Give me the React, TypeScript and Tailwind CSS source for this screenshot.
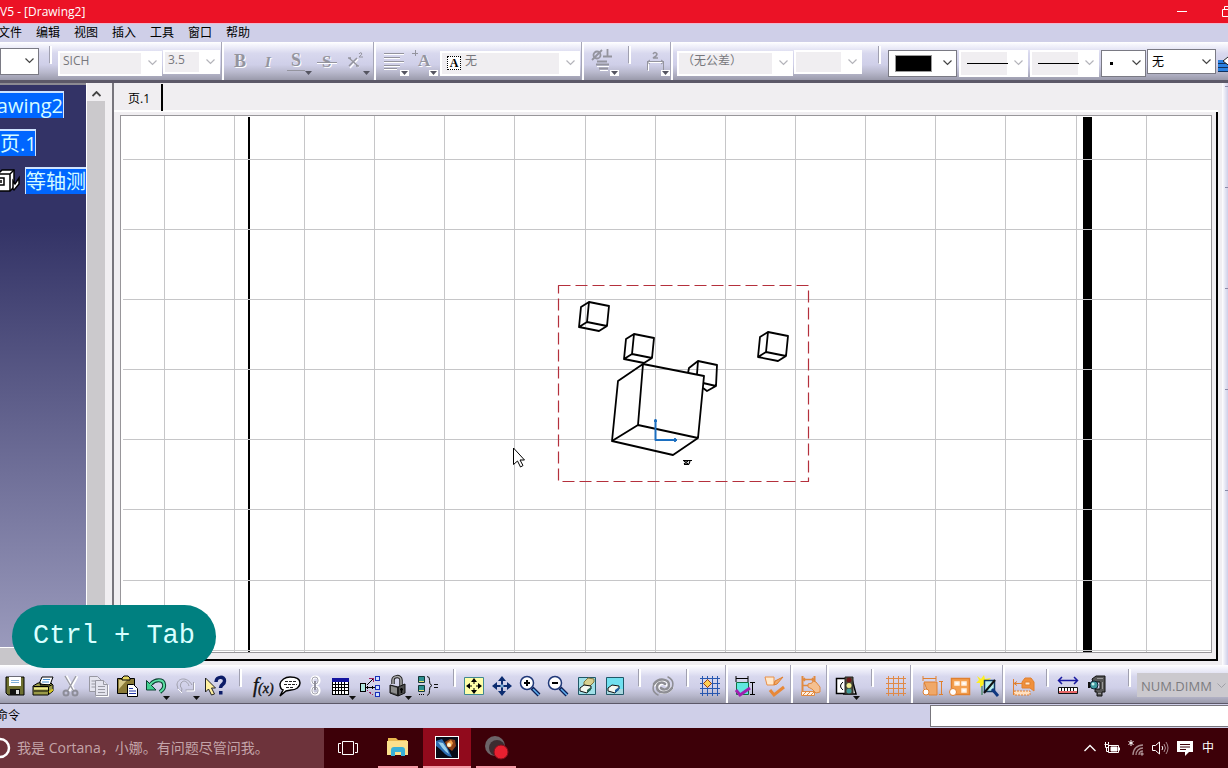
import type { ReactNode } from "react";

const UI_FONT = "font-['Open_Sans','Noto_Sans_CJK_SC',sans-serif]";
const BAR =
  "bg-[linear-gradient(to_bottom,#ffffff_0%,#f4f4fc_8%,#d8d8ee_30%,#cfcfe8_60%,#b8b8cc_80%,#9a9aab_100%)]";

const MUTED = "#94949e";

function PixelGrid({ color }: { color: string }) {
  return <path d="M4.500 2v20M9.500 2v20M14.500 2v20M19.500 2v20M2 4.500h20M2 9.500h20M2 14.500h20M2 19.500h20" stroke={color} />;
}

// All drawings use a 24 x 24 box.
const icons: Record<string, ReactNode> = {
  bold: (
    <>
      <text x="7" y="19" fontSize="18" fontWeight="700" fill="#fff" className="font-['Liberation_Serif',serif]">B</text>
      <text x="6" y="18" fontSize="18" fontWeight="700" fill={MUTED} className="font-['Liberation_Serif',serif]">B</text>
    </>
  ),
  italic: (
    <>
      <text x="9" y="19" fontSize="15" fontWeight="700" fontStyle="italic" fill="#fff" className="font-['Liberation_Serif',serif]">I</text>
      <text x="8" y="18" fontSize="15" fontWeight="700" fontStyle="italic" fill={MUTED} className="font-['Liberation_Serif',serif]">I</text>
    </>
  ),
  underline: (
    <>
      <text x="6" y="18" fontSize="18" fontWeight="700" fill="#fff" className="font-['Liberation_Serif',serif]">S</text>
      <text x="5" y="17" fontSize="18" fontWeight="700" fill={MUTED} className="font-['Liberation_Serif',serif]">S</text>
      <path d="M1 21.500h18" stroke={MUTED} />
    </>
  ),
  strike: (
    <>
      <text x="8" y="19" fontSize="17" fontWeight="700" fill="#fff" className="font-['Liberation_Serif',serif]">S</text>
      <text x="7" y="18" fontSize="17" fontWeight="700" fill={MUTED} className="font-['Liberation_Serif',serif]">S</text>
      <path d="M2 14.500h20" stroke="#fff" />
      <path d="M2 13.500h20" stroke={MUTED} />
    </>
  ),
  superscript: (
    <>
      <path d="M6 10l9 8M14 10l-8 9" stroke="#fff" strokeWidth="1.500" />
      <path d="M5 9l9 8M13 9l-8 8M4 9h3M12 17h3" stroke={MUTED} strokeWidth="1.500" />
      <path d="M15 5q1-2 2.500-1t-2.500 4h4" stroke={MUTED} />
    </>
  ),
  align: (
    <>
      <path d="M2 5.500h20M2 9.500h16M2 13.500h20M2 17.500h16M2 20.500h13" stroke="#fff" />
      <path d="M2 4.500h20M2 8.500h16M2 12.500h20M2 16.500h16M2 19.500h13" stroke={MUTED} />
    </>
  ),
  anchor: (
    <>
      <path d="M1 4.500h6M4.500 1v6" stroke={MUTED} />
      <text x="8" y="18" fontSize="17" fontWeight="700" fill="#fff" className="font-['Liberation_Serif',serif]">A</text>
      <text x="7" y="17" fontSize="17" fontWeight="700" fill={MUTED} className="font-['Liberation_Serif',serif]">A</text>
    </>
  ),
  symbol: (
    <g stroke={MUTED} fill="none" strokeWidth="1.800">
      <path d="M6 17.500h12M9 21.500h8" stroke="#fff" strokeWidth="1" />
      <circle cx="6" cy="6" r="3.500" />
      <path d="M1 11L11 1M12 7.500h9M16.500 0v7M5 15.500h13M8 19.500h9M6 12.500h10" />
    </g>
  ),
  dimension: (
    <g fill="none">
      <path d="M5.500 22v-8.500h14" stroke="#fff" />
      <path d="M4.500 21V12.500h16V21M4 13l3-2M4 13l3 2M21 13l-3-2M21 13l-3 2" stroke={MUTED} />
      <path d="M10 5q2-3 4 0q0 2-4 4h5" stroke={MUTED} strokeWidth="1.500" />
    </g>
  ),
  save: (
    <>
      <path d="M3 3h18v18H5l-2-2z" fill="#6e7030" stroke="#000" />
      <path d="M6 3h12v9H6z" fill="#fff" />
      <path d="M8 6.500h8M8 8.500h8" stroke="#7fb0d8" />
      <path d="M7 15h10v6H7z" fill="#111" />
      <path d="M13 16h3v4h-3z" fill="#ddd" />
    </>
  ),
  print: (
    <>
      <path d="M8 10l3-7h11l-3 8z" fill="#fff" stroke="#000" />
      <path d="M12 5.500h7M11 8h7" stroke="#4a90d0" />
      <path d="M2 12l5-3h3l-1 2h9l2-2 2 2v6l-5 4H2z" fill="#9a9a48" stroke="#000" />
      <path d="M2.500 12.500h15l4-2M17.500 13v7M3 17h14" stroke="#000" fill="none" />
      <path d="M3 14.500h14" stroke="#eee98a" strokeWidth="2" />
      <path d="M18 18.500l4-3" stroke="#d8c820" strokeWidth="2" />
    </>
  ),
  cut: (
    <g fill="none">
      <path d="M7 2l8 15M18 2l-8 15" stroke="#fff" strokeWidth="3" />
      <path d="M6 2l8 14M17 2L9 16" stroke="#9a9aa4" strokeWidth="1.500" />
      <circle cx="7" cy="19" r="2.500" stroke="#8d8d98" strokeWidth="2" />
      <circle cx="16" cy="19" r="2.500" stroke="#8d8d98" strokeWidth="2" />
    </g>
  ),
  copy: (
    <g fill="#e4e4ee" stroke="#9898a2">
      <path d="M2.500 2.500h8l4 4v11h-12z" />
      <path d="M8.500 6.500h8l4 4v11h-12z" />
      <path d="M16.500 6.500v4h4M11 12.500h7M11 15.500h7M11 18.500h7M4.500 7h4M4.500 10h4M4.500 13h4" />
      <path d="M21.500 11v11.500H9" stroke="#fff" fill="none" />
    </g>
  ),
  paste: (
    <>
      <path d="M2.500 4.500h17v15h-17z" fill="#8a7a38" stroke="#000" />
      <path d="M4 6h8L4 15z" fill="#d5c88a" />
      <path d="M7 6V4l2-2h4l2 2v2z" fill="#e8d860" stroke="#000" />
      <path d="M12.500 10.500h6l4 4v8h-10z" fill="#fff" stroke="#000" />
      <path d="M14 14.500h4M14 17h7M14 19.500h7" stroke="#2438a8" />
    </>
  ),
  undo: (
    <>
      <path d="M7 10c4-5 12-5 13 0 1 4-1 6-4 8" fill="none" stroke="#0a4030" strokeWidth="4" />
      <path d="M2.500 6.500v9.500h9.500z" fill="#42d090" stroke="#0a4030" />
      <path d="M6 11c4-6 13-6 14-1 1 4-1 6-4 8" fill="none" stroke="#5ce0a4" strokeWidth="2" />
    </>
  ),
  redo: (
    <g fill="none" stroke="#a0a0ac">
      <path d="M19 11C14 2 4 4 4 11q0 4 4 7l1-3q-3-3-1-6c3-4 7-1 8 3" />
      <path d="M20.500 8v8h-8" />
      <path d="M21.500 9v8h-8M5 15l4 4" stroke="#fff" />
    </g>
  ),
  help: (
    <>
      <path d="M2.500 4v14l3-3 3 6 3-1-3-6h4z" fill="#fff0a0" stroke="#222" />
      <path d="M13 8c0-6 9-6 8.500-1 0 4-4 3-4 7" fill="none" stroke="#0c1c68" strokeWidth="3.500" />
      <path d="M16 17h3.500v3.500H16z" fill="#0c1c68" />
    </>
  ),
  formula: (
    <g className="font-['Liberation_Serif',serif]" fontStyle="italic" fill="#111" stroke="#111" strokeWidth=".4">
      <text x="3" y="18" fontSize="20">f</text>
      <text x="8" y="19" fontSize="14">(x)</text>
    </g>
  ),
  comment: (
    <>
      <path d="M12 3c6 0 10 2 10 6s-4 7-9 7l-5 1-6 5 3-6c-3-1-3-4-3-6 1-4 5-7 10-7z" fill="#fff" stroke="#000" strokeWidth="1.500" />
      <path d="M7 7.500h11M6 10.500h13M8 13.500h8" stroke="#222" strokeDasharray="3 1" />
    </>
  ),
  link: (
    <g fill="none">
      <rect x="8" y="3" width="7" height="7" rx="3" stroke="#fff" strokeWidth="3" />
      <rect x="8" y="13" width="7" height="7" rx="3" stroke="#fff" strokeWidth="3" />
      <rect x="8" y="3" width="6" height="7" rx="3" stroke="#a4a4b0" />
      <rect x="8" y="13" width="6" height="7" rx="3" stroke="#a4a4b0" />
      <path d="M11 7v9" stroke="#90909c" strokeWidth="2" />
    </g>
  ),
  table: (
    <>
      <path d="M2 4h17v17H2z" fill="#fff" />
      <path d="M2.500 8v13M5.500 8v13M8.500 8v13M11.500 8v13M14.500 8v13M18.500 8v13M2 10.500h17M2 13.500h17M2 16.500h17M2 20.500h17" stroke="#000" />
      <path d="M2 4h17v4H2z" fill="#1414a0" />
    </>
  ),
  tree: (
    <g fill="none" shapeRendering="crispEdges">
      <path d="M2.500 9.500h5v8h-5z" fill="#b0e8e0" stroke="#000" />
      <path d="M17.500 2.500h4v4h-4zM17.500 11.500h4v4h-4zM17.500 18.500h4v4h-4z" fill="#cfe0ff" stroke="#1830b8" />
      <path d="M7.500 13.500h9M9 11l6-6M14 12v3M9 12v3" stroke="#000" />
      <path d="M9 16l6 5" stroke="#a02060" strokeDasharray="2 1" />
      <path d="M11 4h4v4" stroke="#a02060" />
    </g>
  ),
  lock: (
    <>
      <path d="M7 10V6c0-4 8-5 8 0v6" fill="none" stroke="#222" strokeWidth="3.500" />
      <path d="M7 10V6c0-4 8-5 8 0v6" fill="none" stroke="#aaa" strokeWidth="1.500" />
      <path d="M4 11l8 2v9l-8-3zM12 13l7-3v9l-7 3z" fill="#4c4c4c" stroke="#111" />
      <path d="M5 12l6 2v6l-6-2z" fill="#8c8c8c" />
      <path d="M15.500 14v5M14 15.500h3" stroke="#000" strokeWidth="1.500" />
    </>
  ),
  equate: (
    <g fill="none">
      <path d="M2.500 2.500h6v6h-6zM2.500 11.500h6v6h-6z" fill="#2c9090" stroke="#123838" />
      <path d="M3 7.500h5M3 16.500h5" stroke="#e8e070" />
      <path d="M3 20.500h6" stroke="#000" strokeDasharray="1 1" />
      <path d="M11 2.500q3 0 2.500 4t2.500 5q-3 1-2.500 5t-2.500 5" stroke="#111" />
      <path d="M18 10.500h4M18 13.500h4" stroke="#111" />
    </g>
  ),
  fit: (
    <>
      <path d="M2.500 3.500h19v17h-19z" fill="#ffffa8" stroke="#408890" />
      <path d="M12 7v3M12 14v3M6 12h4M14 12h4" stroke="#000" />
      <path d="M12 4l3 4H9zM12 20l3-4H9zM4 12l4-3v6zM20 12l-4-3v6z" fill="#000" />
    </>
  ),
  pan: (
    <>
      <path d="M12 4v16M4 12h16" stroke="#0c2c70" strokeWidth="2" />
      <path d="M12 2l4 5H8zM12 22l4-5H8zM2 12l5-4v8zM22 12l-5-4v8z" fill="#0c2c70" />
      <path d="M10.500 10.500h3v3h-3z" fill="#80b0d8" />
    </>
  ),
  zoomIn: (
    <>
      <path d="M14 14l7 7" stroke="#0c2058" strokeWidth="4" />
      <path d="M15 15l6 6" stroke="#60b0f0" strokeWidth="1.500" />
      <circle cx="9" cy="9" r="6.500" fill="#fff" stroke="#203878" strokeWidth="1.500" />
      <path d="M6 9h6M9 6v6" stroke="#000" strokeWidth="2" />
    </>
  ),
  zoomOut: (
    <>
      <path d="M14 14l7 7" stroke="#0c2058" strokeWidth="4" />
      <path d="M15 15l6 6" stroke="#60b0f0" strokeWidth="1.500" />
      <circle cx="9" cy="9" r="6.500" fill="#fff" stroke="#203878" strokeWidth="1.500" />
      <path d="M6 9h6" stroke="#000" strokeWidth="2" />
    </>
  ),
  viewA: (
    <>
      <path d="M3.500 3.500h17v17h-17z" fill="#a0e0e8" stroke="#205868" />
      <path d="M9 8l4-4 6 1v3l-4 4-6-1z" fill="#d8d090" stroke="#807840" />
      <path d="M5 14l4-3 7 1v3l-4 4-7-2z" fill="#f4f8f0" stroke="#111" />
      <path d="M12 16l4-3v3l-4 3z" fill="#206050" />
    </>
  ),
  viewB: (
    <>
      <path d="M3.500 3.500h17v17h-17z" fill="#70e0f0" stroke="#205868" />
      <path d="M4 15h16v5H4z" fill="#a8d8e0" />
      <path d="M5 14l4-3 7 1v3l-4 4-7-2z" fill="#f4f8f0" stroke="#111" />
      <path d="M12 16l4-3v3l-4 3z" fill="#2060a0" />
    </>
  ),
  update: (
    <g fill="none" strokeLinecap="round">
      <g stroke="#fff" strokeWidth="3">
        <path d="M15 11c-3-3-8-1-8 3 0 5 9 7 14 0" />
        <path d="M11 15c3 2 7 0 7-4 0-5-9-7-14 0" />
      </g>
      <g stroke="#8e8e94" strokeWidth="2.500">
        <path d="M14 10c-3-3-8-1-8 3 0 6 10 8 15 1" />
        <path d="M10 14c3 3 8 1 8-3 0-6-10-8-15-1" />
        <path d="M3 10c-2 5 0 9 4 11M21 14c2-5 0-9-4-11" strokeWidth="1.500" />
      </g>
    </g>
  ),
  gridBlue: (
    <>
      <PixelGrid color="#2858b0" />
      <path d="M9.500 5.500l4 4-4 4-4-4z" fill="#ffd050" stroke="#a04010" />
    </>
  ),
  dimCheck: (
    <>
      <path d="M3 2v6M15 2v6M3 4.500h12M19.500 8v13M17 8.500h5M17 20.500h5" stroke="#000" />
      <path d="M3.500 8.500h12v12h-12z" fill="#60e8e0" stroke="#107040" />
      <path d="M3 16l4 5 10-7" fill="none" stroke="#a020b0" strokeWidth="3" />
    </>
  ),
  brushCheck: (
    <>
      <path d="M2 3h9v8H4z" fill="#ffe8cc" stroke="#e89048" />
      <path d="M20 3l-6 7-3 1 1-4z" fill="#f0a868" stroke="#e08030" />
      <path d="M7 16l4 5 10-8" fill="none" stroke="#e88838" strokeWidth="3" />
    </>
  ),
  hatchHand: (
    <g stroke="#e08a40" fill="none">
      <path d="M3.500 2v15M15.500 2v6" strokeWidth="2" />
      <path d="M4 5.500h11M4 11.500h7M6 4l-2 1.500L6 7M13 4l2 1.500L13 7" strokeWidth="1.500" />
      <path d="M2.500 17.500h13v4h-13z" fill="#fff0e0" />
      <path d="M4 21l3-3M8 21l3-3M12 21l3-3" />
      <path d="M9 10l4-1 1-2 3 1 4 5v5l-4 1-4-4-4-2z" fill="#f5c090" />
    </g>
  ),
  traffic: (
    <>
      <path d="M2.500 4.500h10v15H2.500zM18 5l4 15H9" fill="#fff" stroke="#000" strokeWidth="1.500" />
      <path d="M9 8q-5 4 0 8" stroke="#000" fill="none" />
      <path d="M11 3h8v17h-8z" fill="#4c4c3c" stroke="#222" />
      <circle cx="15" cy="6" r="2.500" fill="#6a1818" />
      <circle cx="15" cy="11.500" r="2.500" fill="#f0ec90" />
      <circle cx="15" cy="17" r="2.500" fill="#409a98" />
    </>
  ),
  gridOrange: <PixelGrid color="#e08a48" />,
  dimBox: (
    <g stroke="#e08030">
      <path d="M3 2v5M16 2v5M3 4.500h13M21.500 7v14M19 7.500h4M19 20.500h4" />
      <path d="M4 8h13v13H9z" fill="#f0a868" />
      <circle cx="6" cy="18" r="3" fill="#fff" />
      <path d="M4 15V9" />
    </g>
  ),
  tiles: (
    <g stroke="#e08030">
      <path d="M3.500 4.500h18v16h-18z" fill="#f4a050" strokeWidth="1.500" />
      <path d="M7 8h4v3H7zM14 8h4v3h-4zM14 15h4v3h-4z" fill="#fff" stroke="#fff0e0" strokeWidth="1.500" />
      <circle cx="5" cy="18" r="3.500" fill="#fff" />
    </g>
  ),
  highlight: (
    <>
      <path d="M1 2l4 3 3-4 1 4 6-1-4 4 2 4-5-2-4 4V9L0 9l3-3z" fill="#fff020" />
      <path d="M8.500 6.500h10v11h-10z" fill="#b8f0f0" stroke="#103860" strokeWidth="1.500" />
      <path d="M8 19L19 6" stroke="#111" strokeWidth="2" />
      <path d="M16 15l6 7" stroke="#103880" strokeWidth="3" />
      <path d="M6 12v9" stroke="#207040" />
    </>
  ),
  lockDim: (
    <g stroke="#e08030">
      <path d="M2.500 5v16M3 9.500h8M3 9.500l3-2M3 9.500l3 2" fill="none" />
      <path d="M3 17h16v4H3z" fill="#ffe0c0" strokeDasharray="2 1" />
      <path d="M11 8l3-4h6l3 4v9l-4-3h-8z" fill="#f0903c" />
      <path d="M14 8h5v3h-5z" fill="#ffe8d0" />
    </g>
  ),
  ruler: (
    <>
      <path d="M3 6.500h18M6 3L2.500 6.500 6 10M18 3l3.500 3.500L18 10" stroke="#1818a0" fill="none" strokeWidth="1.500" />
      <path d="M2.500 13.500h19v6h-19z" fill="#fff" stroke="#111" />
      <path d="M3 17h18v2H3z" fill="#e86868" />
      <path d="M5.500 14v3M8.500 14v3M11.500 14v3M14.500 14v3M17.500 14v3" stroke="#111" />
    </>
  ),
  clamp: (
    <>
      <path d="M7 5l4-3h9v16h-3v4h-5v-4h-2v-3h5V8H8z" fill="#555" stroke="#111" />
      <path d="M12 4.500h6M17.500 8v7M13 19.500h3" stroke="#999" />
      <circle cx="9" cy="11" r="4" fill="#409aa0" stroke="#123" />
      <circle cx="8" cy="10" r="1.500" fill="#c8f0f0" />
      <path d="M4 8v6" stroke="#111" strokeWidth="2" />
    </>
  ),
};

function Glyph({ name }: { name: string }) {
  return (
    <svg width="24" height="24" viewBox="0 0 24 24" fill="none" aria-hidden="true" className="shrink-0">
      {icons[name]}
    </svg>
  );
}

function ToolButton({
  icon,
  label,
  arrow,
  className = "w-7",
}: {
  icon: string;
  label: string;
  arrow?: "plain" | "box" | "dark";
  className?: string;
}) {
  return (
    <button type="button" aria-label={label} className={`relative flex h-full shrink-0 items-center justify-center ${className}`}>
      <Glyph name={icon} />
      {arrow && (
        <svg
          width="9"
          height="6"
          viewBox="0 0 9 6"
          aria-hidden="true"
          className={`absolute -right-px ${arrow === "dark" ? "bottom-0.5" : "bottom-1"} ${arrow === "box" ? "bg-white" : ""}`}
        >
          <path d="M1 1h7L4.500 5z" fill={arrow === "dark" ? "#111" : "#555560"} />
        </svg>
      )}
    </button>
  );
}

function Grip({ className = "" }: { className?: string }) {
  return <div className={`mt-1 h-[18px] w-[3px] shrink-0 self-start border-r-2 border-b border-white border-l border-l-[#a0a0b0] ${className}`} />;
}

function Divider({ className = "" }: { className?: string }) {
  return <div className={`h-full w-[3px] shrink-0 border-l border-l-[#a6a6b8] bg-white ${className}`} />;
}

function Combo({
  label,
  options,
  disabled,
  className = "",
  children,
}: {
  label: string;
  options: string[];
  disabled?: boolean;
  className?: string;
  children?: ReactNode;
}) {
  return (
    <div className={`relative shrink-0 overflow-hidden border bg-white ${disabled ? "border-white" : "border-[#7a7a84]"} ${className}`}>
      {disabled && <div className="absolute inset-y-px left-px right-5 bg-[#f0eef1]" />}
      <select
        aria-label={label}
        disabled={disabled}
        className={`relative block w-full appearance-none bg-transparent text-xs ${
          disabled ? "h-[19px] text-[#77777c]" : "h-full text-black"
        } ${children ? "pl-6" : "pl-1"}`}
      >
        {options.map((o) => (
          <option key={o}>{o}</option>
        ))}
      </select>
      {children}
      <svg width="9" height="6" viewBox="0 0 9 6" fill="none" aria-hidden="true" className="pointer-events-none absolute inset-y-0 right-1 my-auto">
        <path d="M.5.500l4 4 4-4" stroke={disabled ? "#b4b4ba" : "#444"} strokeWidth="1.200" />
      </svg>
    </div>
  );
}

function TitleBar() {
  return (
    <header className="flex h-[23px] shrink-0 items-center justify-between bg-[#eb1226] text-white">
      <h1 className="text-xs whitespace-nowrap">V5 - [Drawing2]</h1>
      <div className="flex items-center">
        <button type="button" aria-label="最小化" className="mr-[34px] h-[23px]">
          <svg width="11" height="11" viewBox="0 0 11 11"><path d="M0 5.500h10" stroke="#fff" /></svg>
        </button>
        <button type="button" aria-label="还原" className="h-[23px] w-[6px] overflow-hidden">
          <svg width="11" height="11" viewBox="0 0 11 11" fill="none" stroke="#fff">
            <path d="M.5 3.500h7v7h-7zM2.500 3V.5h7v7H8" />
          </svg>
        </button>
      </div>
    </header>
  );
}

const menus = ["文件", "编辑", "视图", "插入", "工具", "窗口", "帮助"];

function MenuBar() {
  return (
    <nav className="flex h-[19px] shrink-0 items-center gap-[14px] border-t border-[#f0b8d0] bg-[#cfcfe8] text-xs text-black">
      {menus.map((m) => (
        <button key={m} type="button" className="shrink-0 whitespace-nowrap first:-ml-[2px]">
          {m}
        </button>
      ))}
    </nav>
  );
}

function FormatBar() {
  return (
    <div className={`flex h-[38px] shrink-0 items-center overflow-hidden ${BAR}`}>
      <Combo label="样式" options={[""]} className="h-[27px] w-[39px]" />
      <Grip className="ml-[10px] mr-[6px]" />
      <Combo label="字体" options={["SICH"]} disabled className="mt-1 h-[25px] w-[104px]" />
      <Combo label="字号" options={["3.5"]} disabled className="mt-px ml-px h-[24px] w-[57px]" />
      <Divider className="ml-px mr-[2px]" />
      <div className="flex h-full gap-px">
        <ToolButton icon="bold" label="粗体" />
        <ToolButton icon="italic" label="斜体" />
        <ToolButton icon="underline" label="下划线" arrow="plain" />
        <ToolButton icon="strike" label="删除线" />
        <ToolButton icon="superscript" label="上标" arrow="plain" />
      </div>
      <Divider className="mx-[3px]" />
      <ToolButton icon="align" label="对齐" arrow="box" className="w-[29px]" />
      <ToolButton icon="anchor" label="定位点" arrow="box" className="w-[29px]" />
      <Combo label="框架" options={["无"]} disabled className="mt-1 ml-[3px] h-[25px] w-[140px]">
        <span className="pointer-events-none absolute top-1 left-[6px] flex h-[14px] w-[14px] items-center justify-center border border-dotted border-black bg-white font-['Liberation_Serif',serif] text-xs leading-3 font-bold">
          A
        </span>
      </Combo>
      <Divider className="ml-px mr-1" />
      <ToolButton icon="symbol" label="插入符号" arrow="box" className="w-[30px]" />
      <Grip className="mx-[10px]" />
      <ToolButton icon="dimension" label="尺寸线" arrow="box" className="w-7" />
      <Divider className="ml-px mr-1" />
      <Combo label="公差说明" options={["（无公差）"]} disabled className="mt-1 h-[25px] w-[116px]" />
      <Combo label="公差" options={[""]} disabled className="mt-px ml-px h-[24px] w-[68px]" />
      <Grip className="ml-[16px] mr-[7px]" />
      <Combo label="颜色" options={[""]} className="mt-1 h-[27px] w-[69px]">
        <span className="pointer-events-none absolute top-1 left-[6px] h-[17px] w-[37px] border border-[#999] bg-black" />
      </Combo>
      <Combo label="线宽" options={[""]} disabled className="mt-1 ml-[2px] h-[27px] w-[69px]">
        <span className="pointer-events-none absolute top-[12px] left-[7px] h-px w-[41px] bg-black" />
      </Combo>
      <Combo label="线型" options={[""]} disabled className="mt-1 ml-[2px] h-[27px] w-[69px]">
        <span className="pointer-events-none absolute top-[12px] left-[7px] h-px w-[41px] bg-black" />
      </Combo>
      <Combo label="点" options={[""]} className="mt-1 ml-[2px] h-[27px] w-[45px]">
        <span className="pointer-events-none absolute top-[11px] left-2 h-[3px] w-[3px] bg-black" />
      </Combo>
      <Combo label="图层" options={["无"]} className="mt-px ml-px h-[25px] w-[69px]" />
      <button type="button" aria-label="格式刷" className="ml-[2px] mt-2 h-5 min-w-[8px] flex-1 overflow-hidden">
        <svg width="20" height="20" viewBox="0 0 20 20" fill="none">
          <path d="M0 6.500h9M0 10.500h16M0 14.500h16" stroke="#2a80e0" strokeWidth="3" />
          <path d="M0 8.500h16M0 12.500h16M0 16.500h16" stroke="#10305c" />
          <path d="M5 6l5-4 8 8-4 3z" fill="#fff" stroke="#222" />
        </svg>
      </button>
    </div>
  );
}

function SpecTree() {
  return (
    <aside className="flex w-[105px] shrink-0 flex-col bg-[#c8c6ca]">
      <div className="flex min-h-0 flex-1">
        <div className="flex w-[86px] flex-col gap-[11px] overflow-hidden border-t-2 border-[#8c8a92] bg-[linear-gradient(to_bottom,#333366_0%,#333366_25%,#9a9abc_100%)] pt-[6px] text-xl leading-[25px] whitespace-nowrap text-[#d4fbff]">
          <div className="flex h-[27px] w-16 justify-end border-t-2 border-r border-[#cfe4ff] bg-[#0066ff]">awing2</div>
          <div className="flex h-[27px] w-9 border-t-2 border-r border-[#cfe4ff] bg-[#0066ff]">页.1</div>
          <div className="flex items-center gap-1">
            <svg width="21" height="26" viewBox="0 0 21 26" fill="#fff" stroke="#000" strokeWidth="1.500" className="shrink-0" aria-hidden="true">
              <path d="M-2 6l4-4h12v17l-4 4H-2z" />
              <path d="M-2 6h12v17M10 6l4-4M-3 10h7v7h-7" fill="none" />
              <path d="M1 12v3" />
              <path d="M13 21v-8l2 3 4-6v6l-5 6z" />
            </svg>
            <div className="h-[27px] shrink-0 border-t-2 border-l border-[#cfe4ff] bg-[#0066ff]">等轴测</div>
          </div>
        </div>
        <div className="flex w-[19px] flex-col border-l border-white bg-[#cbc9cc]">
          <button type="button" aria-label="向上滚动" className="flex h-[18px] items-center justify-center bg-[#f0eef1] pt-1">
            <svg width="9" height="6" viewBox="0 0 9 6" fill="none"><path d="M.5 5l4-4 4 4" stroke="#444" strokeWidth="1.800" /></svg>
          </button>
        </div>
      </div>
      <div className="h-[18px] border-t border-white bg-[#c8c6ca]" />
    </aside>
  );
}

// Top back corner of each small cube.
const cubes = [
  [589, 302],
  [634, 334],
  [768, 332],
];

const gridLine = (i: number) => Math.floor(i * 70.15 + 0.1) + 43.5;
const columns = Array.from({ length: 30 }, (_, i) => gridLine(i));
const rows = Array.from({ length: 20 }, (_, i) => gridLine(i));

function Sheet() {
  return (
    <svg className="block h-full w-full bg-white" aria-label="等轴测视图" role="img">
      <rect x="127" y="1" width="2" height="100%" fill="#000" />
      <rect x="962" y="1" width="9" height="100%" fill="#000" />
      <g stroke="#c6c6c8" shapeRendering="crispEdges">
        {columns.map((x) => (
          <line key={x} x1={x} x2={x} y1="0" y2="100%" />
        ))}
        {rows.map((y) => (
          <line key={y} x1="2" x2="100%" y1={y} y2={y} />
        ))}
      </g>
      <g transform="translate(-121 -116)" fill="none" stroke="#000" strokeWidth="1.800" strokeLinejoin="round">
        <rect x="558.500" y="285.500" width="250" height="196" stroke="#b4303c" strokeWidth="1.200" strokeDasharray="12 5" />
        {cubes.map(([x, y]) => (
          <path
            key={x}
            transform={`translate(${x} ${y})`}
            d="M0 0l20 4-2 20-20-4zM0 0l-8 5-2 20 20 4 8-5M-2 20l-8 5"
          />
        ))}
        <path d="M688 373l1-5 9-7 19 4-1 21-9 5-4-3M698 361l-1 13M703 383l13 3" />
        <path d="M643 364l61 12-6 62-60-13zM643 364l-25 17-6 60 61 14 25-17M638 425l-26 16" />
        <path d="M655.500 419v21H677" stroke="#1c6fc0" strokeWidth="2" />
        <path d="M654 421h3M675 438v4" stroke="#1c6fc0" />
        <path d="M683 460.500h9M684 464.500h5M684 461l4 3M688 461l-4 3M690 461l-1 3" strokeWidth="1.200" />
        <path d="M513.500 448v16.500l4-3.500 3 6 2.500-1.500-3-5.500h4.500z" fill="#fff" strokeWidth="1" />
      </g>
    </svg>
  );
}

function Workspace() {
  return (
    <main className="flex min-h-0 flex-1 border-t-[3px] border-[#5c5868] bg-[#f0eef1]">
      <SpecTree />
      <div className="ml-[7px] flex min-w-0 flex-1 flex-col border-l-2 border-[#77757c]">
        <div className="flex h-[29px] shrink-0 items-start border-b-2 border-white pl-[3px]">
          <button type="button" className="mt-px h-[27px] w-[46px] border-r-2 border-black pt-0.5 text-center text-xs">
            页.1
          </button>
        </div>
        <div className="min-h-0 flex-1 border-r-2 border-b-2 border-black pt-[3px] pr-1 pb-[6px] pl-[6px]">
          <div className="h-full border border-[#98969a]">
            <Sheet />
          </div>
        </div>
        <div className="h-1 shrink-0" />
      </div>
      <div className="ml-1 flex w-[6px] shrink-0 flex-col gap-[100px] bg-[linear-gradient(to_right,#ffffff,#cfcfe8)] pt-[3px]">
        {[0, 1, 2, 3, 4].map((n) => (
          <div key={n} className="ml-auto h-px w-[3px] bg-[#8a8aa8]" />
        ))}
      </div>
    </main>
  );
}

function ToolGroup({ children }: { children: ReactNode }) {
  return <div className="flex h-full shrink-0 items-center pt-1">{children}</div>;
}

function StandardBar() {
  return (
    <div className={`flex h-[39px] shrink-0 overflow-hidden border-b border-[#5c5868] pl-px ${BAR}`}>
      <ToolGroup>
        <ToolButton icon="save" label="保存" />
        <ToolButton icon="print" label="打印" />
        <ToolButton icon="cut" label="剪切" />
        <ToolButton icon="copy" label="复制" />
        <ToolButton icon="paste" label="粘贴" />
        <ToolButton icon="undo" label="撤销" arrow="dark" className="w-[29px]" />
        <ToolButton icon="redo" label="重做" arrow="dark" className="w-[30px]" />
        <ToolButton icon="help" label="这是什么" className="w-[29px]" />
      </ToolGroup>
      <Grip className="ml-[10px] mr-[6px]" />
      <ToolGroup>
        <ToolButton icon="formula" label="公式" />
        <ToolButton icon="comment" label="注释" />
        <ToolButton icon="link" label="链接" className="w-6" />
        <ToolButton icon="table" label="设计表" arrow="dark" />
        <ToolButton icon="tree" label="知识工程" />
        <ToolButton icon="lock" label="锁定" arrow="dark" />
        <ToolButton icon="equate" label="等效尺寸" className="w-8" />
      </ToolGroup>
      <Grip className="ml-[9px] mr-1" />
      <ToolGroup>
        <ToolButton icon="fit" label="全部适应" />
        <ToolButton icon="pan" label="平移" />
        <ToolButton icon="zoomIn" label="放大" />
        <ToolButton icon="zoomOut" label="缩小" />
        <ToolButton icon="viewA" label="隐藏/显示" className="w-[29px]" />
        <ToolButton icon="viewB" label="交换可视空间" />
      </ToolGroup>
      <Grip className="ml-[9px] mr-[6px]" />
      <ToolGroup>
        <ToolButton icon="update" label="更新" className="w-8" />
      </ToolGroup>
      <Grip className="mx-[7px]" />
      <ToolGroup>
        <ToolButton icon="gridBlue" label="点对齐" />
      </ToolGroup>
      <Divider className="ml-px mr-[2px]" />
      <ToolGroup>
        <ToolButton icon="dimCheck" label="分析显示模式" className="w-[30px]" />
        <ToolButton icon="brushCheck" label="格式检查" className="w-[30px]" />
      </ToolGroup>
      <Divider className="mr-[3px]" />
      <ToolGroup>
        <ToolButton icon="hatchHand" label="创建剖面线" className="w-[30px]" />
      </ToolGroup>
      <Divider className="mr-[3px]" />
      <ToolGroup>
        <ToolButton icon="traffic" label="过滤器" arrow="dark" className="w-7" />
      </ToolGroup>
      <Grip className="ml-[11px] mr-2" />
      <ToolGroup>
        <ToolButton icon="gridOrange" label="草图网格" />
      </ToolGroup>
      <Divider className="mr-[5px]" />
      <ToolGroup>
        <ToolButton icon="dimBox" label="生成尺寸" />
        <ToolButton icon="tiles" label="视图布局" />
        <ToolButton icon="highlight" label="高亮" />
      </ToolGroup>
      <Divider className="mr-1" />
      <ToolGroup>
        <ToolButton icon="lockDim" label="锁定尺寸" />
      </ToolGroup>
      <Grip className="ml-[9px] mr-[5px]" />
      <ToolGroup>
        <ToolButton icon="ruler" label="测量间距" />
        <ToolButton icon="clamp" label="测量项" className="w-[30px]" />
      </ToolGroup>
      <Grip className="ml-4 mr-[6px]" />
      <div className="relative mt-2 h-6 min-w-[84px] flex-1 bg-[#cbc9ce]">
        <select aria-label="尺寸格式" disabled className="h-full w-full appearance-none pl-1 text-[13px] text-[#7c7c80]">
          <option>NUM.DIMM</option>
        </select>
        <svg width="9" height="6" viewBox="0 0 9 6" fill="none" aria-hidden="true" className="absolute top-[10px] right-[2px]">
          <path d="M.5.500l4 4 4-4" stroke="#a0a0a6" />
        </svg>
      </div>
    </div>
  );
}

function CommandLine() {
  return (
    <div className="flex h-6 shrink-0 items-center justify-between bg-[#cfcfe8] text-xs text-black">
      <label htmlFor="command" className="flex w-5 justify-end whitespace-nowrap">
        命令
      </label>
      <input id="command" type="text" className="h-[22px] w-[298px] border border-r-0 border-[#77757c] bg-white px-1 outline-none" />
    </div>
  );
}

function TaskBar() {
  return (
    <footer className="flex h-10 shrink-0 items-center bg-[#3d0008] text-white">
      <button type="button" className="flex h-full w-[324px] shrink-0 items-center bg-[#6d333b] text-left">
        <svg width="11" height="22" viewBox="0 0 11 22" fill="none" aria-hidden="true">
          <circle cx="0" cy="11" r="9" stroke="#fff" strokeWidth="2.500" />
        </svg>
        <span className="ml-[6px] text-sm whitespace-nowrap text-[#c3a3a8]">我是 Cortana，小娜。有问题尽管问我。</span>
      </button>
      <button type="button" aria-label="任务视图" className="flex h-full w-12 items-center justify-center">
        <svg width="20" height="16" viewBox="0 0 20 16" fill="none" stroke="#fff">
          <path d="M4.500 1.500h11v13h-11zM3 3.500H.5v9H3M17 3.500h2.500v9H17" />
        </svg>
      </button>
      <button type="button" aria-label="文件资源管理器" className="ml-[6px] flex h-full w-10 items-center justify-center border-b-2 border-[#f59aa6]">
        <svg width="24" height="22" viewBox="0 0 24 22">
          <path d="M2 2h8l2 2h9v3H2z" fill="#e8b850" />
          <path d="M1 5h21v14H1z" fill="#fbe08c" />
          <path d="M5 20v-6q0-3 3-3h8q3 0 3 3v6h-4v-4H9v4z" fill="#38b0d8" />
        </svg>
      </button>
      <button type="button" aria-label="CATIA" className="ml-[5px] flex h-full w-12 items-center justify-center border-b-2 border-[#f59aa6] bg-[#910a1c]">
        <svg width="24" height="23" viewBox="0 0 24 23">
          <path d="M0 0h24v23H0z" fill="#fff" />
          <path d="M1 1h22v21H1z" fill="#080c18" />
          <path d="M1 5l6-2 4 6 3 6 3 6-4-1C9 18 5 12 1 10z" fill="#2c6cb0" />
          <path d="M3 6l5 1 4 6 2 5C9 15 6 10 3 6z" fill="#98d0ec" />
          <path d="M10 6l5-3 5 1 1 6-4 5-5-4z" fill="#8c4018" />
          <path d="M12 7l4-3 2 3-2 4-3-1z" fill="#f0a048" />
          <circle cx="14" cy="9" r="2" fill="#fff4d0" />
        </svg>
      </button>
      <button type="button" aria-label="录屏" className="ml-[5px] flex h-full w-10 items-center justify-center border-b-2 border-[#f59aa6]">
        <svg width="26" height="26" viewBox="0 0 26 26">
          <circle cx="12" cy="12" r="10" fill="#6c6468" />
          <circle cx="14" cy="14" r="8" fill="#3c2c30" />
          <circle cx="18" cy="18" r="7" fill="#e82030" stroke="#80101c" />
        </svg>
      </button>
      <div className="mr-[14px] ml-auto flex items-center gap-2">
        <svg width="12" height="8" viewBox="0 0 12 8" fill="none"><path d="M.5 7L6 1.500 11.500 7" stroke="#fff" strokeWidth="1.300" /></svg>
        <svg width="16" height="14" viewBox="0 0 16 14" fill="none" stroke="#fff">
          <path d="M4.500 4.500h10v7h-10zM15.500 6.500v3M.5 3.500h4v3h-3v-3M1.500 1v2M4.500 1v2M2.500 6.500v4h2" />
          <path d="M7 6h6v4H7z" fill="#fff" />
        </svg>
        <svg width="16" height="16" viewBox="0 0 16 16" fill="none" stroke="#a88a8e">
          <path d="M5 15C5 9 9 5 15 5M8 15c0-4 3-7 7-7M11 15q0-4 4-4" strokeWidth="1.300" />
          <path d="M13 13h2v2h-2z" fill="#a88a8e" />
          <path d="M3 0v6M.5 1.500l5 3M5.500 1.500l-5 3" stroke="#fff" />
        </svg>
        <svg width="17" height="14" viewBox="0 0 17 14" fill="none" stroke="#fff">
          <path d="M.5 4.500h3l4-3.500v12l-4-3.500h-3zM10 5q1.500 2 0 4" />
          <path d="M12 3q3 4 0 8M14 1q4 6 0 12" stroke="#a88a8e" />
        </svg>
        <svg width="16" height="16" viewBox="0 0 16 16">
          <path d="M0 1h16v11h-4l-4 4v-4H0z" fill="#fff" />
          <path d="M3 4.500h10M3 7h10M3 9.500h6" stroke="#3d0008" />
        </svg>
        <span className="ml-px text-xs">中</span>
      </div>
    </footer>
  );
}

export default function App() {
  return (
    <div className={`relative flex h-screen flex-col overflow-hidden bg-[#f0eef1] ${UI_FONT}`}>
      <TitleBar />
      <MenuBar />
      <FormatBar />
      <Workspace />
      <StandardBar />
      <CommandLine />
      <TaskBar />
      <div className="absolute bottom-[100px] left-3 flex h-[63px] w-[204px] items-center justify-center rounded-full bg-[#008080] font-['Liberation_Mono',monospace] text-[27px] whitespace-nowrap text-[#d8ffff]">
        Ctrl + Tab
      </div>
    </div>
  );
}
